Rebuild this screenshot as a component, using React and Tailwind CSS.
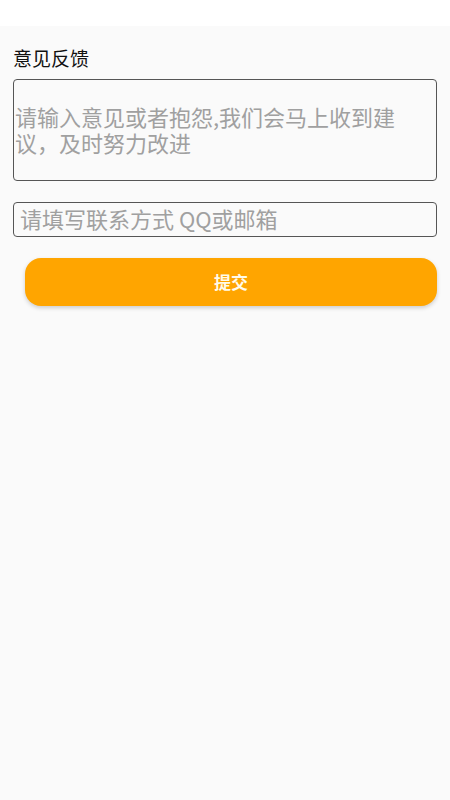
import React from "react";

export default function App() {
  const font = { fontFamily: '"Noto Sans CJK SC", "Noto Sans", sans-serif' };
  return (
    <div className="min-h-[800px] w-full bg-[#fafafa]" style={font}>
      <div className="h-[26px] bg-white" />
      <div className="px-[13px]">
        <div className="mt-[20px] text-[19px] leading-[24px] text-[#111]">意见反馈</div>
        <div className="mt-[9px] flex h-[102px] items-center rounded-[4px] border border-[#555] pb-[2px] pl-[1px] pr-[30px]">
          <div className="text-[22px] leading-[26px] text-[#a0a0a0]">
            请输入意见或者抱怨,我们会马上收到建
            <br />
            议，及时努力改进
          </div>
        </div>
        <div className="mt-[21px] flex h-[35px] items-center rounded-[4px] border border-[#555] px-[6px] pb-[3px]">
          <span className="text-[22px] leading-[26px] text-[#a0a0a0]">请填写联系方式 QQ或邮箱</span>
        </div>
        <div className="ml-[12px] mt-[21px] flex h-[48px] items-center justify-center rounded-[16px] bg-[#ffa500] shadow-[0_2px_4px_rgba(0,0,0,0.18)]">
          <span className="text-[17px] font-bold leading-[24px] text-[#fffbea]">提交</span>
        </div>
      </div>
    </div>
  );
}
